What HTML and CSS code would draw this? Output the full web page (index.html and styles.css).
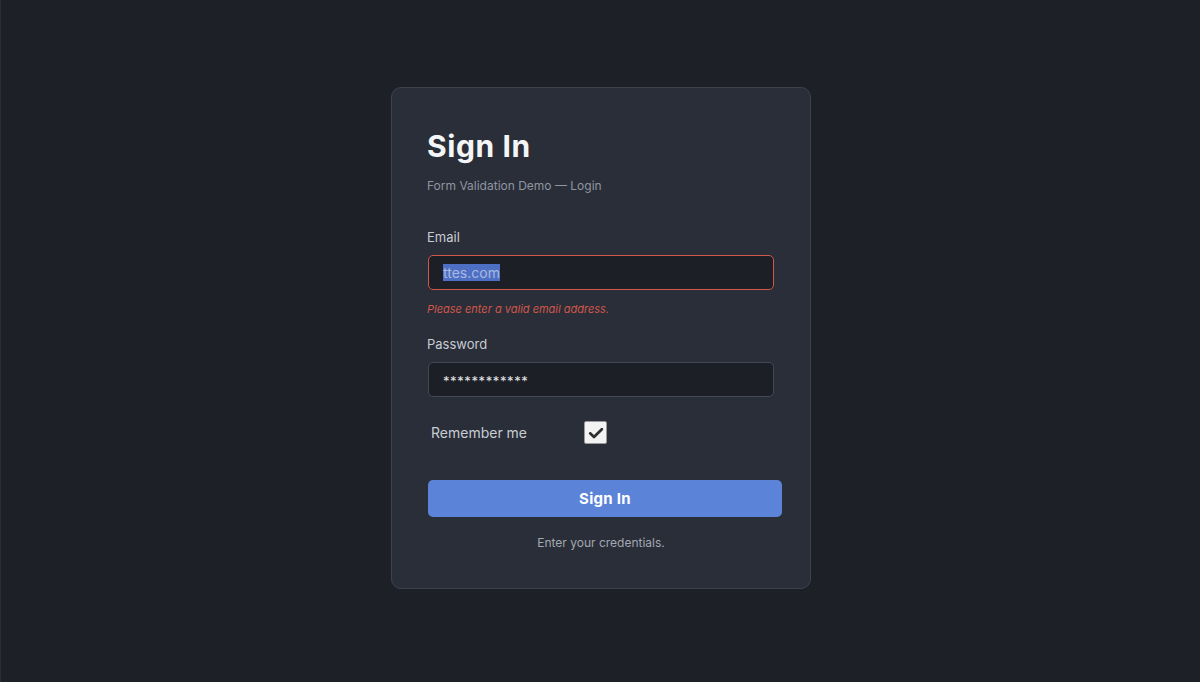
FILE: index.html
```html
<!DOCTYPE html>
<html>
<head>
<meta charset="utf-8">
<link rel="stylesheet" href="styles.css">
</head>
<body>
<div class="page">
  <div class="card">
    <h1 class="title">Sign In</h1>
    <p class="subtitle">Form Validation Demo — Login</p>
    <div class="field">
      <label class="label">Email</label>
      <div class="input input-error"><span class="sel">ttes.com</span></div>
      <div class="error">Please enter a valid email address.</div>
    </div>
    <div class="field">
      <label class="label">Password</label>
      <div class="input pw">************</div>
    </div>
    <div class="remember">
      <span class="remember-text">Remember me</span>
      <span class="check"><svg width="18" height="18" viewBox="0 0 16 16"><path d="M2.8 8.3 L6.2 11.6 L13.2 4.6" fill="none" stroke="#2e2e2e" stroke-width="2.4" stroke-linecap="round" stroke-linejoin="round"/></svg></span>
    </div>
    <button class="btn">Sign In</button>
    <p class="footer">Enter your credentials.</p>
  </div>
</div>
</body>
</html>
```
FILE: styles.css
```css
* { box-sizing: border-box; }
html, body { margin: 0; padding: 0; }
body {
  background: #1d2027;
  font-family: Inter, "Noto Sans", sans-serif;
  width: 1200px;
  height: 682px;
  overflow: hidden;
}
.page {
  display: flex;
  justify-content: center;
  padding-top: 87px;
  height: 682px;
  border-left: 1px solid #2a2d35;
}
.card {
  width: 420px;
  height: 502px;
  background: #2a2e38;
  border: 1px solid #3d424d;
  border-radius: 10px;
  padding: 36px 35px 0 35px;
  margin-left: 1px;
}
.title {
  margin: 4px 0 0 0;
  font-size: 30px;
  font-weight: 700;
  color: #f4f5f7;
  line-height: 36px;
  letter-spacing: 0.6px;
}
.subtitle {
  margin: 14px 0 0 0;
  font-size: 12px;
  color: #8f95a1;
  line-height: 16px;
}
.field { margin-top: 35px; }
.field + .field { margin-top: 20px; }
.label {
  display: block;
  font-size: 13px;
  color: #c8ccd4;
  line-height: 16px;
}
.input {
  margin-top: 10px;
  margin-left: 1px;
  width: 346px;
  height: 35px;
  background: #1c1f25;
  border: 1px solid #434854;
  border-radius: 5px;
  padding: 0 14px;
  display: flex;
  align-items: center;
  font-size: 14px;
  color: #e4e6ea;
}
.input-error { border-color: #d0574a; }
.sel {
  background: #4d70c4;
  color: #aab9e0;
  line-height: 17px;
}
.pw { letter-spacing: 0.6px; font-size: 13px; padding-top: 2px; }
.error {
  margin-top: 12px;
  font-size: 11px;
  font-style: italic;
  color: #d0574a;
  line-height: 14px;
}
.remember {
  display: flex;
  align-items: center;
  margin-top: 24px;
  margin-left: 4px;
}
.remember-text {
  font-size: 14px;
  color: #c8ccd4;
  width: 153px;
}
.check {
  width: 23px;
  height: 23px;
  background: #f3f3f3;
  border: 1px solid #9a9a9a;
  border-radius: 2px;
  display: flex;
  align-items: center;
  justify-content: center;
}
.btn {
  display: block;
  margin-top: 36px;
  margin-left: 1px;
  width: 354px;
  height: 37px;
  background: #5b84d8;
  border: none;
  border-radius: 5px;
  color: #ffffff;
  font-family: Inter, "Noto Sans", sans-serif;
  font-size: 15px;
  font-weight: 700;
  letter-spacing: 0.3px;
}
.footer {
  margin: 18px 0 0 0;
  text-align: center;
  font-size: 12px;
  color: #a3a8b2;
  line-height: 16px;
}
```
